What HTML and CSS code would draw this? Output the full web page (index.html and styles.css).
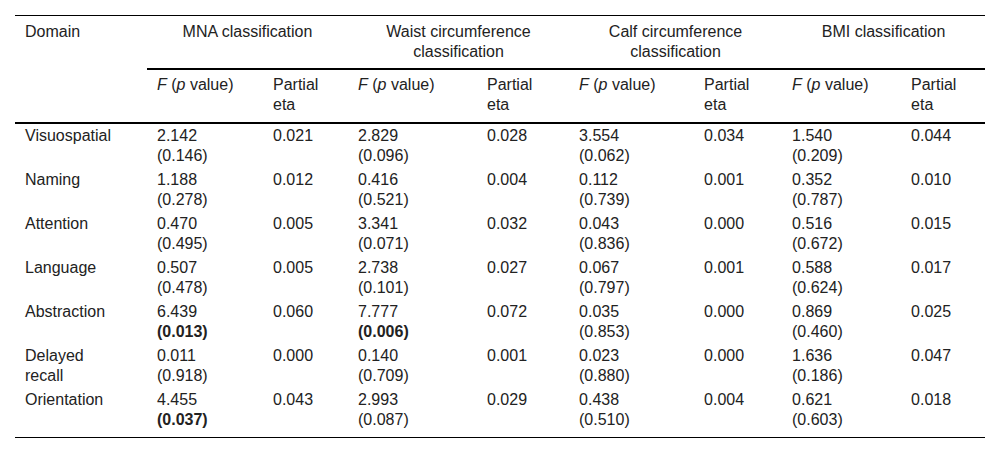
FILE: index.html
```html
<!DOCTYPE html>
<html lang="en">
<head>
<meta charset="utf-8">
<title>Domain comparison</title>
<link rel="stylesheet" href="styles.css">
</head>
<body>
<div class="wrap">
<table class="stats">
  <colgroup>
    <col class="w-domain">
    <col class="w-f1"><col class="w-p1">
    <col class="w-f2"><col class="w-p2">
    <col class="w-f3"><col class="w-p3">
    <col class="w-f4"><col class="w-p4">
  </colgroup>
  <thead>
    <tr class="groups">
      <th rowspan="2" class="domain">Domain</th>
      <th colspan="2" class="group">MNA classification</th>
      <th colspan="2" class="group">Waist circumference classification</th>
      <th colspan="2" class="group">Calf circumference classification</th>
      <th colspan="2" class="group">BMI classification</th>
    </tr>
    <tr class="sub">
      <th><i>F</i> (<i>p</i> value)</th><th>Partial<br>eta</th>
      <th><i>F</i> (<i>p</i> value)</th><th>Partial<br>eta</th>
      <th><i>F</i> (<i>p</i> value)</th><th>Partial<br>eta</th>
      <th><i>F</i> (<i>p</i> value)</th><th>Partial<br>eta</th>
    </tr>
  </thead>
  <tbody>
    <tr>
      <td>Visuospatial</td>
      <td>2.142<br>(0.146)</td><td>0.021</td>
      <td>2.829<br>(0.096)</td><td>0.028</td>
      <td>3.554<br>(0.062)</td><td>0.034</td>
      <td>1.540<br>(0.209)</td><td>0.044</td>
    </tr>
    <tr>
      <td>Naming</td>
      <td>1.188<br>(0.278)</td><td>0.012</td>
      <td>0.416<br>(0.521)</td><td>0.004</td>
      <td>0.112<br>(0.739)</td><td>0.001</td>
      <td>0.352<br>(0.787)</td><td>0.010</td>
    </tr>
    <tr>
      <td>Attention</td>
      <td>0.470<br>(0.495)</td><td>0.005</td>
      <td>3.341<br>(0.071)</td><td>0.032</td>
      <td>0.043<br>(0.836)</td><td>0.000</td>
      <td>0.516<br>(0.672)</td><td>0.015</td>
    </tr>
    <tr>
      <td>Language</td>
      <td>0.507<br>(0.478)</td><td>0.005</td>
      <td>2.738<br>(0.101)</td><td>0.027</td>
      <td>0.067<br>(0.797)</td><td>0.001</td>
      <td>0.588<br>(0.624)</td><td>0.017</td>
    </tr>
    <tr>
      <td>Abstraction</td>
      <td>6.439<br><b>(0.013)</b></td><td>0.060</td>
      <td>7.777<br><b>(0.006)</b></td><td>0.072</td>
      <td>0.035<br>(0.853)</td><td>0.000</td>
      <td>0.869<br>(0.460)</td><td>0.025</td>
    </tr>
    <tr>
      <td>Delayed<br>recall</td>
      <td>0.011<br>(0.918)</td><td>0.000</td>
      <td>0.140<br>(0.709)</td><td>0.001</td>
      <td>0.023<br>(0.880)</td><td>0.000</td>
      <td>1.636<br>(0.186)</td><td>0.047</td>
    </tr>
    <tr class="last">
      <td>Orientation</td>
      <td>4.455<br><b>(0.037)</b></td><td>0.043</td>
      <td>2.993<br>(0.087)</td><td>0.029</td>
      <td>0.438<br>(0.510)</td><td>0.004</td>
      <td>0.621<br>(0.603)</td><td>0.018</td>
    </tr>
  </tbody>
</table>
</div>
</body>
</html>
```

FILE: styles.css
```css
html, body {
  margin: 0;
  padding: 0;
  background: #fff;
}

.wrap {
  padding: 15px 15px 0;
}

.stats {
  width: 970px;
  table-layout: fixed;
  border-collapse: separate;
  border-spacing: 0;
  border-top: 1px solid #000;
  border-bottom: 1px solid #000;
  font-family: "Liberation Sans", Arial, sans-serif;
  font-size: 16px;
  line-height: 20px;
  color: #222;
}

.w-domain { width: 132px; }
.w-f1 { width: 116px; }
.w-p1 { width: 85px; }
.w-f2 { width: 129px; }
.w-p2 { width: 92px; }
.w-f3 { width: 125px; }
.w-p3 { width: 88px; }
.w-f4 { width: 119px; }
.w-p4 { width: 84px; }

.stats th {
  font-weight: normal;
  text-align: left;
  vertical-align: top;
}

.stats b {
  font-weight: bold;
}

.groups th {
  padding: 6px 10px 6px;
}

.groups th.group {
  text-align: center;
  border-bottom: 2px solid #000;
}

.groups th.domain {
  border-bottom: 2px solid #000;
}

.sub th {
  padding: 5px 10px 7px;
  border-bottom: 2px solid #000;
}

.stats td {
  padding: 2px 10px 2px;
  vertical-align: top;
  text-align: left;
}

.stats tr.last td {
  padding-bottom: 7px;
}
```
